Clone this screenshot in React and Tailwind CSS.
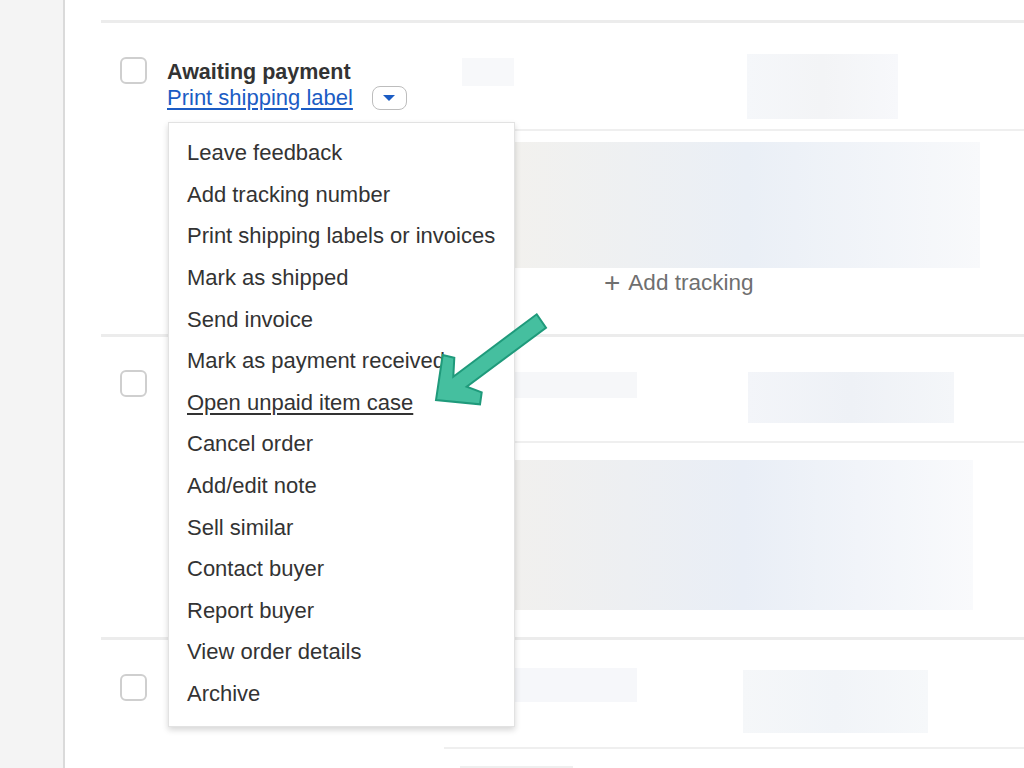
import React from "react";

const menuItems = [
  "Leave feedback",
  "Add tracking number",
  "Print shipping labels or invoices",
  "Mark as shipped",
  "Send invoice",
  "Mark as payment received",
  "Open unpaid item case",
  "Cancel order",
  "Add/edit note",
  "Sell similar",
  "Contact buyer",
  "Report buyer",
  "View order details",
  "Archive",
];

const Checkbox = ({ className = "" }) => (
  <div className={`w-[27px] h-[27px] rounded-[6px] border-2 border-[#cfcfcf] bg-white shrink-0 ${className}`}></div>
);

const Blur = ({ className = "" }) => (
  <div className={`shrink-0 ${className}`}></div>
);

const SectionDivider = () => <div className="ml-[36px] h-[3px] bg-[#ececec]"></div>;
const SubLine = () => <div className="ml-[379px] h-[2px] bg-[#efefef]"></div>;

const App = () => {
  return (
    <div
      className="relative w-[1024px] h-[768px] overflow-hidden bg-white flex"
      style={{ fontFamily: '"Liberation Sans", Arial, Helvetica, sans-serif' }}
    >
      {/* Left gray strip */}
      <div className="w-[65px] h-full bg-[#f4f4f4] border-r-2 border-[#dadada] shrink-0"></div>

      {/* Main list */}
      <div className="flex-1 flex flex-col pt-[20px]">
        {/* Section 1 */}
        <SectionDivider />
        <div className="flex h-[106px]">
          <div className="w-[379px] flex shrink-0 pl-[55px]">
            <Checkbox className="mt-[34px]" />
            <div className="ml-[20px] mt-[36px] flex flex-col">
              <span className="text-[21.5px] leading-[26px] font-bold text-[#333]">Awaiting payment</span>
              <div className="flex items-center">
                <span className="text-[22px] leading-[26px] text-[#1b5cc4] underline underline-offset-[3px]">
                  Print shipping label
                </span>
                <div className="ml-[19px] w-[35px] h-[24px] rounded-[8px] border-[1.5px] border-[#bdbdbd] flex items-center justify-center">
                  <div className="w-0 h-0 border-l-[6px] border-r-[6px] border-t-[6px] border-l-transparent border-r-transparent border-t-[#1b5cc4]"></div>
                </div>
              </div>
            </div>
          </div>
          <Blur className="ml-[18px] mt-[35px] w-[52px] h-[28px] bg-[#f7f8fa]" />
          <Blur className="ml-[233px] mt-[31px] w-[151px] h-[65px] bg-linear-to-r from-[#f5f7fa] via-[#f3f4f6] to-[#f7f8fb]" />
        </div>
        <SubLine />
        <div className="flex flex-col h-[203px] pl-[449px]">
          <Blur className="mt-[11px] w-[466px] h-[126px] bg-linear-to-r from-[#f2f1ee] via-[#eaeff6] to-[#f8f9fb]" />
          <div className="mt-[4px] ml-[90px] flex items-center text-[22.5px] leading-[22px] text-[#6f6f6f]">
            <span className="text-[28px] font-light leading-[22px] mr-[8px]">+</span>
            <span>Add tracking</span>
          </div>
        </div>

        {/* Section 2 */}
        <SectionDivider />
        <div className="flex h-[104px]">
          <div className="w-[379px] flex shrink-0 pl-[55px]">
            <Checkbox className="mt-[33px]" />
          </div>
          <Blur className="ml-[70px] mt-[35px] w-[123px] h-[26px] bg-[#f6f7f9]" />
          <Blur className="ml-[111px] mt-[35px] w-[206px] h-[51px] bg-linear-to-r from-[#f3f5f9] via-[#eef1f6] to-[#f4f6f9]" />
        </div>
        <SubLine />
        <div className="flex flex-col h-[194px] pl-[449px]">
          <Blur className="mt-[17px] w-[459px] h-[150px] bg-linear-to-r from-[#f1f0ee] via-[#e9eef6] to-[#f9fafc]" />
        </div>

        {/* Section 3 */}
        <SectionDivider />
        <div className="flex h-[107px]">
          <div className="w-[379px] flex shrink-0 pl-[55px]">
            <Checkbox className="mt-[34px]" />
          </div>
          <Blur className="ml-[70px] mt-[28px] w-[123px] h-[34px] bg-[#f6f7fa]" />
          <Blur className="ml-[106px] mt-[30px] w-[185px] h-[63px] bg-linear-to-r from-[#f5f7f9] via-[#f1f4f8] to-[#f6f8fa]" />
        </div>
        <SubLine />
        <div className="ml-[395px] mt-[17px] w-[113px] h-[2px] bg-[#efefef]"></div>
      </div>

      {/* Dropdown menu */}
      <div className="absolute left-[168px] top-[122px] w-[347px] h-[605px] bg-white border border-[#e2e2e2] shadow-[0_3px_6px_rgba(0,0,0,0.16)] pt-[9px]">
        {menuItems.map((item) => (
          <div
            key={item}
            className={`h-[41.6px] flex items-center pl-[18px] text-[22px] text-[#333] ${
              item === "Open unpaid item case" ? "underline underline-offset-[3px]" : ""
            }`}
          >
            {item}
          </div>
        ))}
      </div>

      {/* Annotation arrow */}
      <svg className="absolute left-0 top-0 pointer-events-none" width="1024" height="768" viewBox="0 0 1024 768">
        <polygon
          points="536.7,314.3 546,327.7 466.7,386.7 481.7,392.3 480,404.3 436,400 442.7,355 454.3,357.7 453.3,376.7"
          fill="#45bf9f"
          stroke="#1f9a7b"
          strokeWidth="2"
          strokeLinejoin="miter"
        />
      </svg>
    </div>
  );
};

export default App;
